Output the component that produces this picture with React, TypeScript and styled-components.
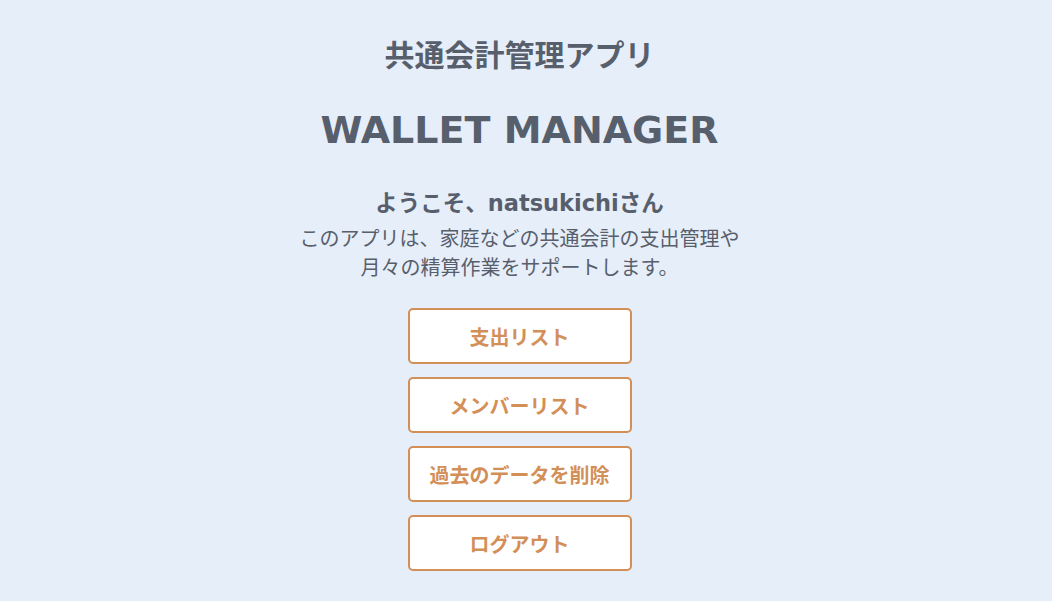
import styled, { createGlobalStyle } from 'styled-components';

const GlobalStyle = createGlobalStyle`
  html, body {
    margin: 0;
    padding: 0;
    background: #e6eef9;
  }
  body {
    font-family: 'DejaVu Sans', 'Noto Sans CJK JP', sans-serif;
  }
`;

const menuItems = ['支出リスト', 'メンバーリスト', '過去のデータを削除', 'ログアウト'];

export default function App() {
  return (
    <>
      <GlobalStyle />
      <StyledPage>
        <StyledAppName>共通会計管理アプリ</StyledAppName>
        <StyledLogo>WALLET MANAGER</StyledLogo>
        <StyledWelcome>ようこそ、natsukichiさん</StyledWelcome>
        <StyledDescription>
          このアプリは、家庭などの共通会計の支出管理や
          <br />
          月々の精算作業をサポートします。
        </StyledDescription>
        <StyledMenu>
          {menuItems.map((label) => (
            <StyledMenuButton key={label}>{label}</StyledMenuButton>
          ))}
        </StyledMenu>
      </StyledPage>
    </>
  );
}

// right padding stands in for the scrollbar gutter of the original page
const StyledPage = styled.main`
  min-height: 601px;
  box-sizing: border-box;
  padding: 33px 13px 0 0;
  display: flex;
  flex-direction: column;
  align-items: center;
  color: #585f6c;
  text-align: center;
`;

const StyledAppName = styled.h2`
  margin: 0;
  font-family: 'Noto Sans CJK JP', sans-serif;
  font-size: 30px;
  line-height: 40px;
  font-weight: 700;
`;

const StyledLogo = styled.h1`
  margin: 33px 0 0;
  font-family: 'DejaVu Sans', sans-serif;
  font-size: 38px;
  line-height: 48px;
  font-weight: 700;
`;

const StyledWelcome = styled.p`
  margin: 34px 0 0;
  font-family: 'DejaVu Sans', 'Noto Sans CJK JP', sans-serif;
  font-size: 22.5px;
  line-height: 30px;
  font-weight: 700;
`;

const StyledDescription = styled.p`
  margin: 5px 0 0;
  font-family: 'Noto Sans CJK JP', sans-serif;
  font-size: 20px;
  line-height: 29px;
  font-weight: 400;
`;

const StyledMenu = styled.nav`
  margin-top: 27px;
  display: flex;
  flex-direction: column;
  gap: 13px;
`;

const StyledMenuButton = styled.button`
  width: 224px;
  height: 56px;
  box-sizing: border-box;
  border: 2px solid #d38f58;
  border-radius: 5px;
  background: #ffffff;
  color: #d38f58;
  font-family: 'Noto Sans CJK JP', sans-serif;
  font-size: 20px;
  font-weight: 700;
  cursor: pointer;
`;
